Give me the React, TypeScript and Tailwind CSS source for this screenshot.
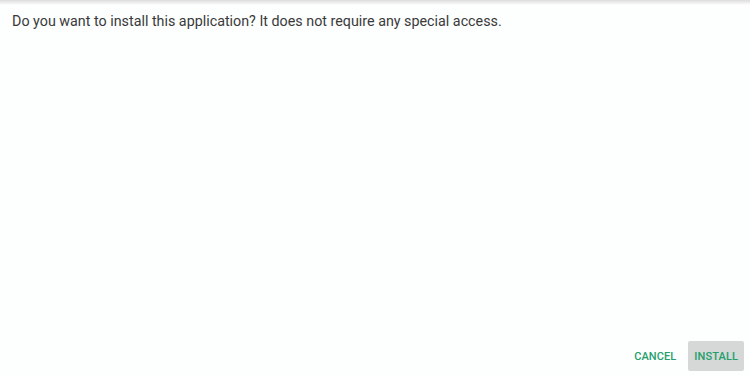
const App = () => {
  return (
    <div
      className="relative flex h-[377px] w-[750px] flex-col bg-[#fdfefe] text-[#333333]"
      style={{ fontFamily: "Roboto, 'Liberation Sans', sans-serif" }}
    >
      <div className="h-[5px] w-full bg-gradient-to-b from-[#dcdcdc] to-[#fdfefe]" />
      <p className="mt-[7px] pl-[12px] text-[14.3px] leading-[18px] text-[#3a3a3a]">
        Do you want to install this application? It does not require any special access.
      </p>
      <div className="flex-1" />
      <div className="flex items-center justify-end gap-[4px] pb-[6px] pr-[6px]">
        <button className="flex h-[30px] items-center px-[8px] pt-[3px] text-[11px] font-medium tracking-[0.1px] text-[#23a06c]">
          CANCEL
        </button>
        <button className="flex h-[30px] items-center rounded-[2px] bg-[#d6d7d7] px-[6px] pt-[3px] text-[11px] font-medium tracking-[0.1px] text-[#23a06c]">
          INSTALL
        </button>
      </div>
    </div>
  );
};

export default App;
